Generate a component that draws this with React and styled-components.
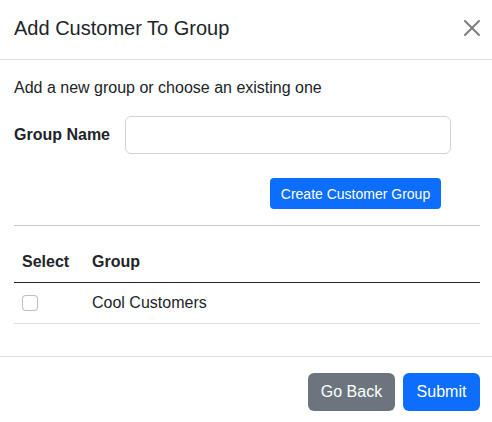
import React from "react";
import styled, { createGlobalStyle } from "styled-components";

const GlobalStyle = createGlobalStyle`
  html, body {
    margin: 0;
    padding: 0;
    background: #fff;
  }
  body {
    font-family: "Liberation Sans", Arial, sans-serif;
    font-size: 16px;
    line-height: 24px;
    color: #212529;
  }
  * { box-sizing: border-box; }
`;

const Modal = styled.div`
  width: 492px;
  background: #fff;
`;

const Header = styled.div`
  display: flex;
  align-items: center;
  padding: 13px 12px 16px 14px;
  border-bottom: 1px solid #dee2e6;
`;

const Title = styled.h5`
  margin: 0;
  font-size: 20px;
  font-weight: 500;
  line-height: 30px;
`;

const CloseButton = styled.button`
  margin-left: auto;
  width: 16px;
  height: 16px;
  padding: 0;
  border: 0;
  background: transparent;
  display: flex;
  opacity: 0.5;
  cursor: pointer;
`;

const Body = styled.div`
  padding: 16px 12px 16px 14px;
`;

const Intro = styled.p`
  margin: 0 0 16px;
`;

const FieldRow = styled.div`
  display: flex;
  align-items: center;
`;

const Label = styled.label`
  width: 111px;
  font-weight: 700;
`;

const Input = styled.input`
  width: 326px;
  height: 38px;
  padding: 6px 12px;
  font: inherit;
  border: 1px solid #ced4da;
  border-radius: 6px;
  background: #fff;
`;

const ActionRow = styled.div`
  display: flex;
  justify-content: flex-end;
  margin-top: 24px;
  padding-right: 39px;
`;

const Button = styled.button`
  display: inline-flex;
  align-items: center;
  justify-content: center;
  width: ${(p) => p.$width}px;
  height: ${(p) => (p.$small ? 31 : 38)}px;
  padding: 0;
  border: 0;
  border-radius: ${(p) => (p.$small ? 4 : 6)}px;
  font-family: inherit;
  font-size: ${(p) => (p.$small ? 14 : 16)}px;
  color: #fff;
  background: ${(p) => (p.$variant === "secondary" ? "#6c757d" : "#0d6efd")};
  cursor: pointer;
`;

const Divider = styled.hr`
  margin: 16px 0;
  border: 0;
  border-top: 1px solid #212529;
  opacity: 0.25;
`;

const Table = styled.table`
  width: 100%;
  border-collapse: collapse;
  margin-bottom: 16px;
`;

const Th = styled.th`
  text-align: left;
  font-weight: 700;
  padding: 8px;
  line-height: 24px;
  border-bottom: 1px solid #212529;
  width: ${(p) => (p.$w ? `${p.$w}px` : "auto")};
`;

const Td = styled.td`
  padding: 8px;
  line-height: 24px;
  border-bottom: 1px solid #dee2e6;
  vertical-align: middle;
`;

const Checkbox = styled.span`
  display: block;
  width: 16px;
  height: 16px;
  border: 1px solid rgba(0, 0, 0, 0.25);
  border-radius: 4px;
  background: #fff;
`;

const Footer = styled.div`
  display: flex;
  justify-content: flex-end;
  gap: 8px;
  padding: 16px 12px 16px 14px;
  border-top: 1px solid #dee2e6;
`;

export default function App() {
  return (
    <>
      <GlobalStyle />
      <Modal>
        <Header>
          <Title>Add Customer To Group</Title>
          <CloseButton aria-label="Close">
            <svg width="16" height="16" viewBox="0 0 16 16" fill="#000">
              <path d="M.293.293a1 1 0 0 1 1.414 0L8 6.586 14.293.293a1 1 0 1 1 1.414 1.414L9.414 8l6.293 6.293a1 1 0 0 1-1.414 1.414L8 9.414l-6.293 6.293a1 1 0 0 1-1.414-1.414L6.586 8 .293 1.707a1 1 0 0 1 0-1.414z" />
            </svg>
          </CloseButton>
        </Header>
        <Body>
          <Intro>Add a new group or choose an existing one</Intro>
          <FieldRow>
            <Label>Group Name</Label>
            <Input type="text" />
          </FieldRow>
          <ActionRow>
            <Button $small $width={171}>Create Customer Group</Button>
          </ActionRow>
          <Divider />
          <Table>
            <thead>
              <tr>
                <Th $w={70}>Select</Th>
                <Th>Group</Th>
              </tr>
            </thead>
            <tbody>
              <tr>
                <Td><Checkbox /></Td>
                <Td>Cool Customers</Td>
              </tr>
            </tbody>
          </Table>
        </Body>
        <Footer>
          <Button $variant="secondary" $width={87}>Go Back</Button>
          <Button $width={77}>Submit</Button>
        </Footer>
      </Modal>
    </>
  );
}
